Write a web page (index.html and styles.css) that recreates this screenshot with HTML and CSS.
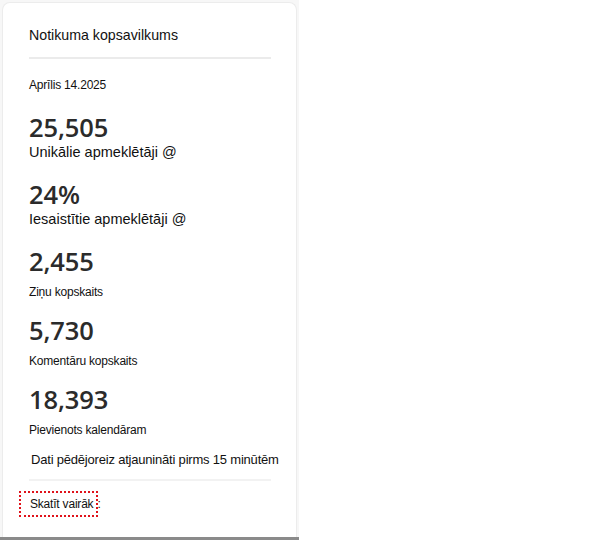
FILE: index.html
```html
<!DOCTYPE html>
<html lang="lv">
<head>
<meta charset="utf-8">
<title>Notikuma kopsavilkums</title>
<link rel="stylesheet" href="styles.css">
</head>
<body>
<div class="frame">
  <section class="card">
    <h2 class="title">Notikuma kopsavilkums</h2>
    <div class="rule"></div>
    <div class="date">Aprīlis 14.2025</div>
    <div class="stat stat-first">
      <div class="num">25,505</div>
      <div class="lbl lbl-lg">Unikālie apmeklētāji @</div>
    </div>
    <div class="stat">
      <div class="num">24%</div>
      <div class="lbl lbl-lg">Iesaistītie apmeklētāji @</div>
    </div>
    <div class="stat">
      <div class="num">2,455</div>
      <div class="lbl lbl-sm">Ziņu kopskaits</div>
    </div>
    <div class="stat">
      <div class="num">5,730</div>
      <div class="lbl lbl-sm">Komentāru kopskaits</div>
    </div>
    <div class="stat">
      <div class="num">18,393</div>
      <div class="lbl lbl-sm">Pievienots kalendāram</div>
    </div>
    <div class="updated">Dati pēdējoreiz atjaunināti pirms 15 minūtēm</div>
    <div class="rule rule-light"></div>
    <a class="more" href="#">Skatīt vairāk <span class="colon">:</span></a>
  </section>
  <div class="bar"></div>
</div>
</body>
</html>
```

FILE: styles.css
```css
* { box-sizing: border-box; }
html, body { margin: 0; padding: 0; background: #ffffff; }
body {
  font-family: "Liberation Sans", Arial, sans-serif;
  color: #111;
  width: 601px;
  height: 540px;
  overflow: hidden;
}
.frame {
  width: 299px;
  padding: 2px 2px 0 2px;
  background: #f7f7f7;
  display: flex;
  flex-direction: column;
}
.card {
  background: #fff;
  border-radius: 8px 8px 0 0;
  border: 1px solid #ececec;
  border-bottom: none;
  height: 535px;
  padding: 0 0 0 26px;
  display: flex;
  flex-direction: column;
}
.title {
  margin: 24px 0 0 0;
  font-size: 14.2px;
  font-weight: 400;
  line-height: 17px;
  color: #111;
  white-space: nowrap;
}
.rule {
  width: 242px;
  height: 2px;
  background: #ebebeb;
  margin-top: 13px;
}
.rule-light { background: #f2f2f2; margin-top: 11px; }
.date {
  margin-top: 19px;
  font-size: 12px;
  line-height: 14px;
  letter-spacing: -0.2px;
  color: #111;
}
.stat { display: flex; flex-direction: column; }
.num {
  font-family: "Open Sans", sans-serif;
  font-weight: 600;
  font-size: 25.5px;
  line-height: 30px;
  color: #2b2b2b;
  letter-spacing: -0.1px;
  margin-top: 8px;
}
.stat-first .num { margin-top: 20px; }
.lbl { color: #111; white-space: nowrap; }
.lbl-lg { font-size: 14.5px; line-height: 17px; margin-top: 2px; margin-bottom: 10px; }
.lbl-sm { font-size: 12px; line-height: 14px; letter-spacing: -0.2px; margin-top: 9px; margin-bottom: 8px; }
.updated {
  margin-top: 6px;
  margin-left: 2px;
  font-size: 13px;
  line-height: 17px;
  letter-spacing: -0.2px;
  color: #111;
  white-space: nowrap;
}
.more {
  align-self: flex-start;
  margin: 10px 0 0 -10px;
  padding: 4px 0 4px 9px;
  border: 2px dotted #e0121a;
  font-size: 12px;
  line-height: 14px;
  letter-spacing: -0.2px;
  color: #111;
  text-decoration: none;
  width: 79px;
  white-space: nowrap;
}
.colon { position: relative; z-index: 1; margin-left: 1px; }
.bar {
  height: 3px;
  background: #8a8a8a;
  margin-left: -2px;
  width: 299px;
}
```
